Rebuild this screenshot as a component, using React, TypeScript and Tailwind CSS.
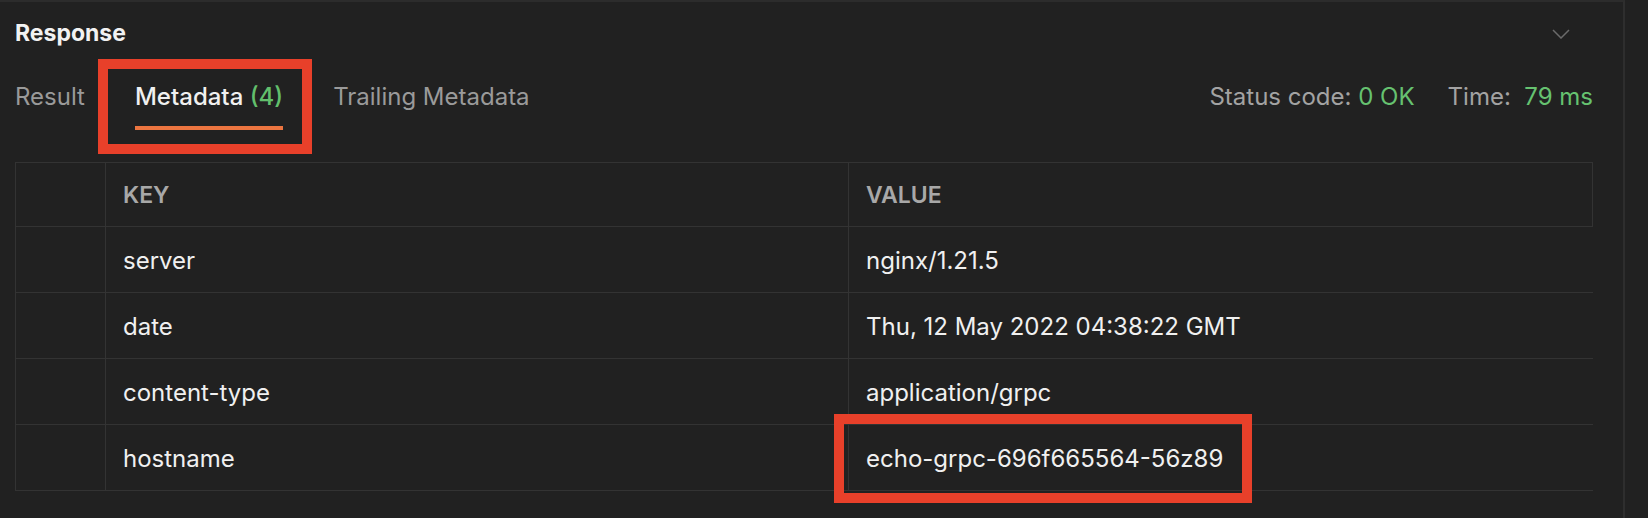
import React from "react";

const rows = [
  { key: "server", value: "nginx/1.21.5" },
  { key: "date", value: "Thu, 12 May 2022 04:38:22 GMT" },
  { key: "content-type", value: "application/grpc" },
  { key: "hostname", value: "echo-grpc-696f665564-56z89" },
];

function Chevron() {
  return (
    <svg width="18" height="10" viewBox="0 0 18 10" fill="none">
      <path d="M1 1l8 8 8-8" stroke="#6b6b6b" strokeWidth="1.5" />
    </svg>
  );
}

export default function App() {
  return (
    <div
      className="relative w-[1648px] h-[518px] bg-[#212121] flex overflow-hidden"
      style={{ fontFamily: "Inter, 'Noto Sans', sans-serif" }}
    >
      <div className="w-[1625px] h-full border-t-2 border-[#2c2c2c] border-r-2 border-r-[#2e2e2e] pl-[15px] pr-[30px] flex flex-col">
        {/* header */}
        <div className="h-[63px] flex items-center justify-between">
          <span className="text-[23px] font-bold text-[#f2f2f2]">Response</span>
          <div className="mr-[23px]">
            <Chevron />
          </div>
        </div>

        {/* tabs */}
        <div className="flex justify-between pt-[17px]">
          <div className="flex gap-[50px]">
            <div className="flex flex-col">
              <span className="text-[24px] leading-[30px] text-[#9a9a9a]">Result</span>
            </div>
            <div className="flex flex-col">
              <span className="text-[24px] leading-[30px] font-medium text-[#f0f0f0]">
                Metadata <span className="text-[#62bf6c]">(4)</span>
              </span>
              <div className="mt-[14px] h-[4px] bg-[#ec7540]" />
            </div>
            <div className="flex flex-col">
              <span className="text-[24px] leading-[30px] text-[#9a9a9a]">Trailing Metadata</span>
            </div>
          </div>
          <div className="text-[24px] leading-[30px] text-[#a3a3a3] flex">
            <span>
              Status code: <span className="text-[#66c270]">0 OK</span>
            </span>
            <span className="ml-[33px]">
              Time:&nbsp; <span className="text-[#66c270]">79 ms</span>
            </span>
          </div>
        </div>

        {/* table */}
        <div className="mt-[32px] border-l border-[#333333] text-[24px]">
          <div className="grid grid-cols-[90px_743px_1fr] h-[65px] border-t border-b border-r border-[#333333]">
            <div className="border-r border-[#333333]" />
            <div className="border-r border-[#333333] flex items-center pl-[17px] pt-[2px] text-[23px] font-semibold text-[#a8a8a8]">
              KEY
            </div>
            <div className="flex items-center pl-[17px] pt-[2px] text-[23px] font-semibold text-[#a8a8a8]">
              VALUE
            </div>
          </div>
          {rows.map((r) => (
            <div
              key={r.key}
              className="grid grid-cols-[90px_743px_1fr] h-[66px] border-b border-[#333333]"
            >
              <div className="border-r border-[#333333]" />
              <div className="border-r border-[#333333] flex items-center pl-[17px] pt-[3px] text-[#f0f0f0]">
                {r.key}
              </div>
              <div className="flex items-center pl-[17px] pt-[3px] text-[#f0f0f0]">{r.value}</div>
            </div>
          ))}
        </div>
      </div>

      {/* annotation boxes */}
      <div className="absolute left-[98px] top-[59px] w-[214px] h-[95px] border-[10px] border-[#e8402a]" />
      <div className="absolute left-[834px] top-[414px] w-[418px] h-[89px] border-[10px] border-[#e8402a]" />
    </div>
  );
}
